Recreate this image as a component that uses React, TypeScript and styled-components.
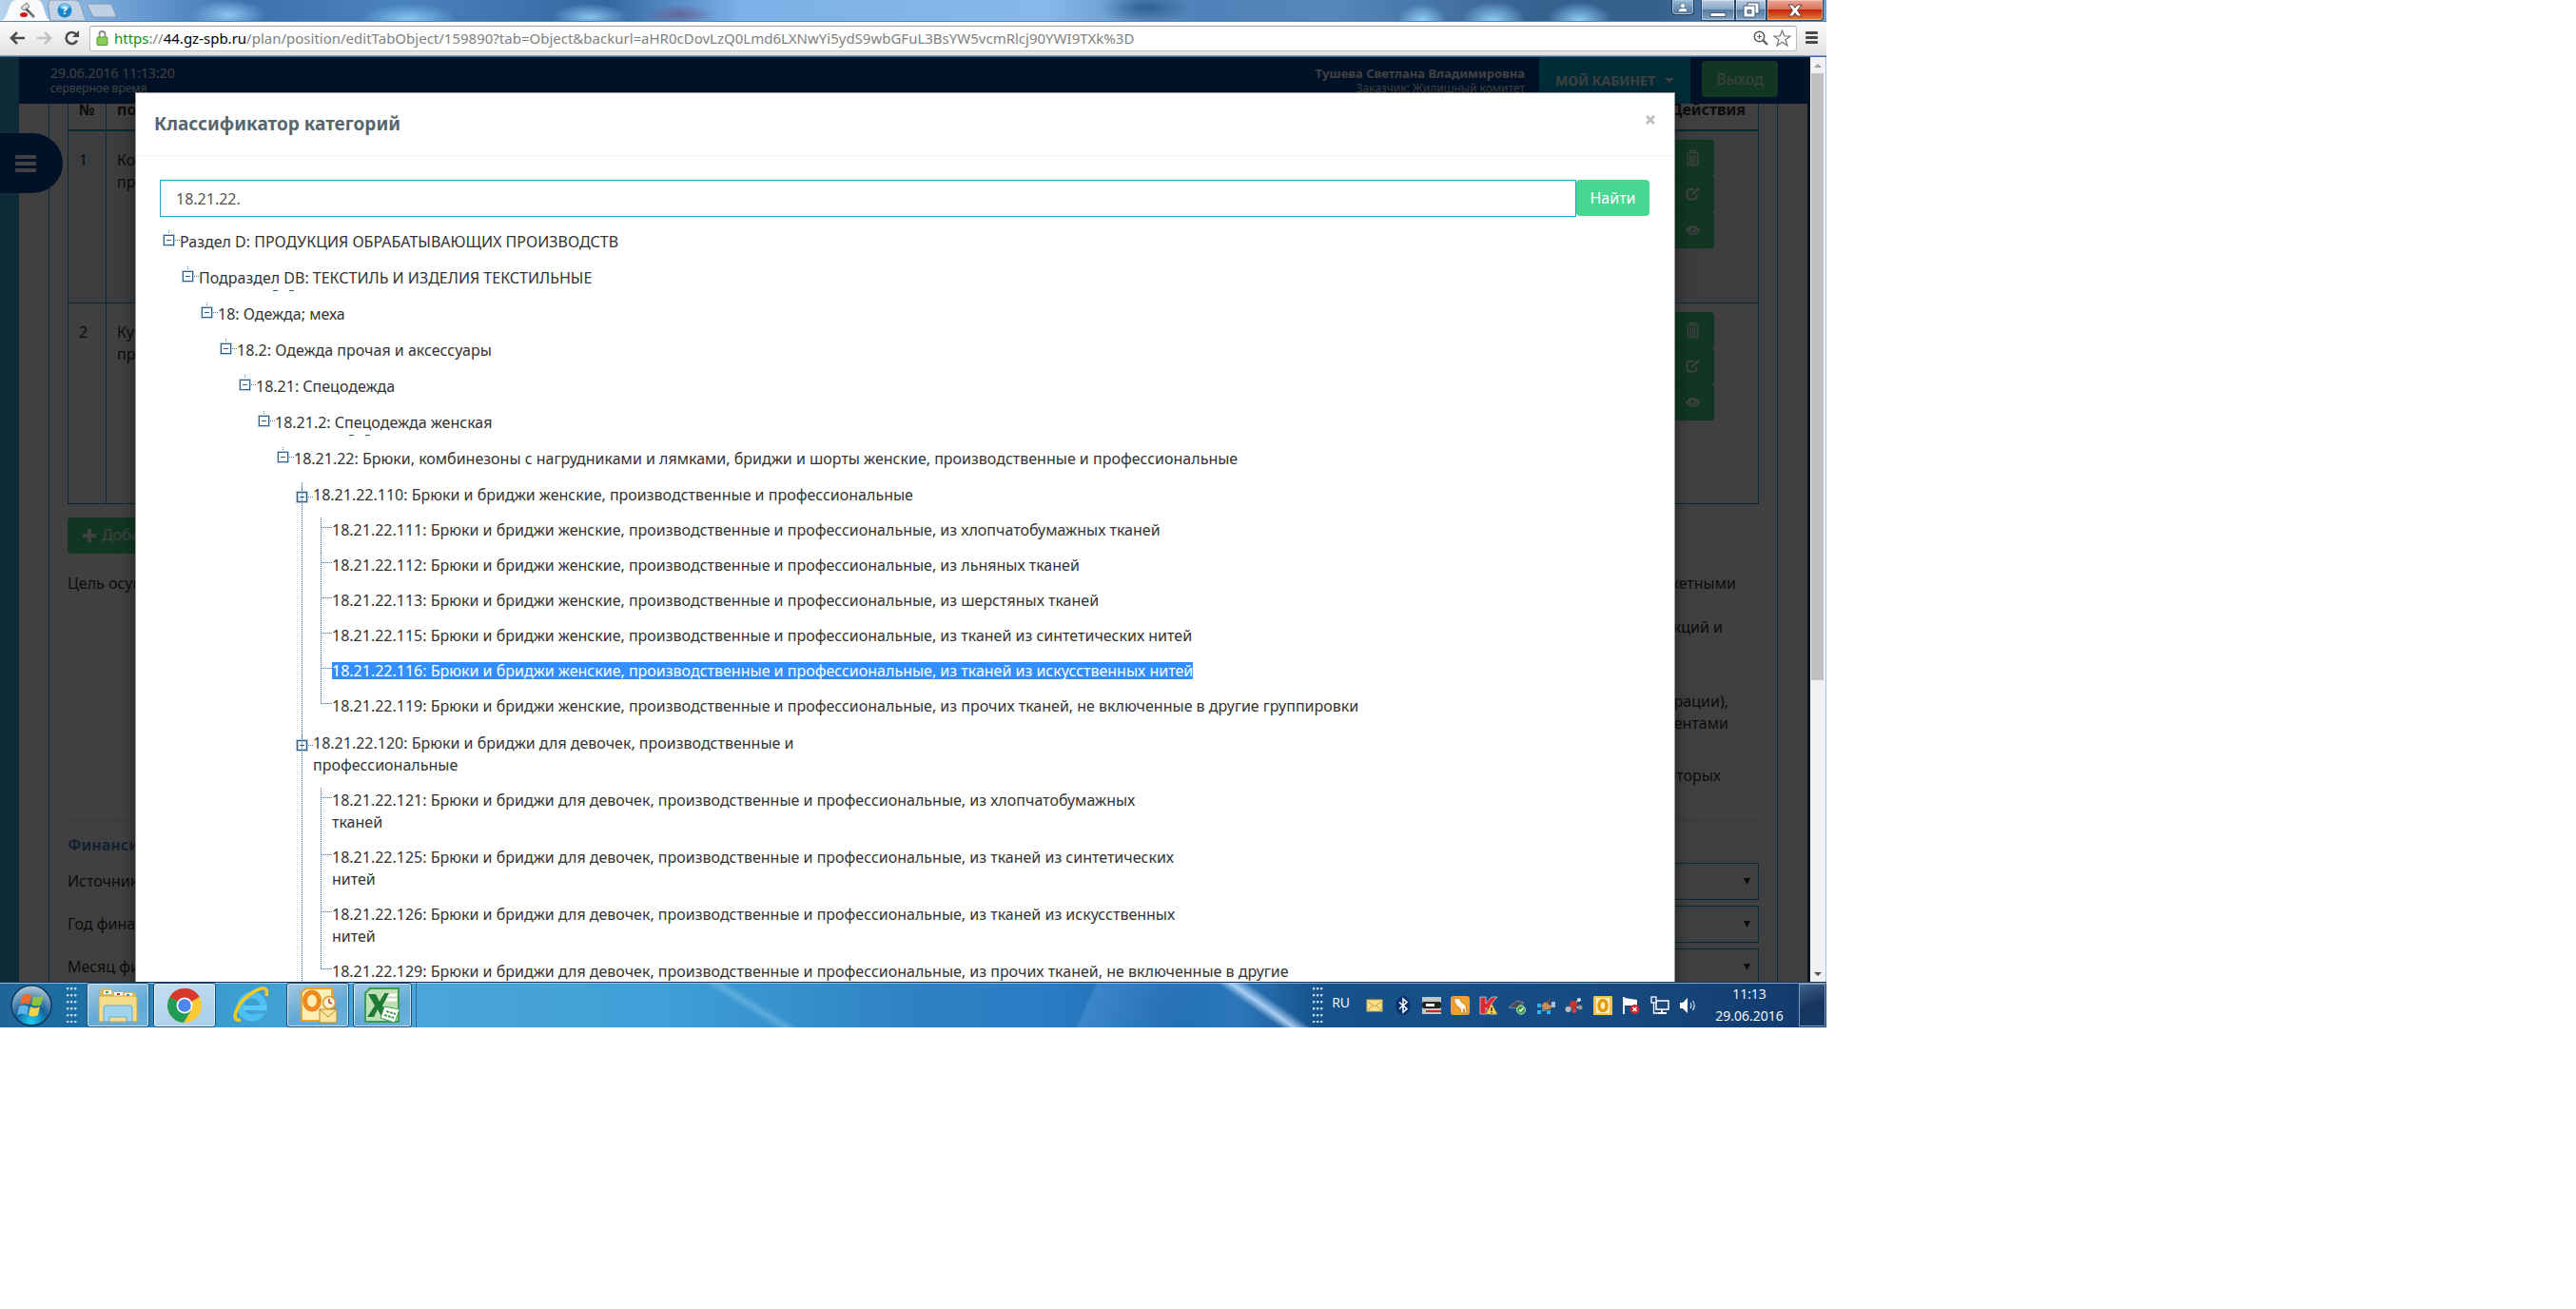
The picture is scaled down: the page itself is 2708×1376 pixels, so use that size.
import React from "react";
import styled, { createGlobalStyle, css } from "styled-components";

const Global = createGlobalStyle`
  *, *::before, *::after { box-sizing: border-box; }
  html, body { margin: 0; background: #fff; }
  button, input, select { font: inherit; color: inherit; margin: 0; }
  button { border: 0; padding: 0; background: none; cursor: pointer; }
  ul { list-style: none; margin: 0; padding: 0; }
`;

const uiFont = `"Open Sans", "Noto Sans", sans-serif`;
const siteFont = `"Noto Sans", "Open Sans", sans-serif`;
const teal = "#2ba0d0";
const green = "#48d791";
const navy = "#0448a0";

const Page = styled.div`
  display: flex;
  min-height: 100vh;
  padding: 0 788px 296px 0;
`;

const Screen = styled.div`
  flex: 1;
  min-width: 0;
  height: calc(100vh - 296px);
  display: flex;
  flex-direction: column;
  overflow: hidden;
`;

/* ---------- browser chrome ---------- */

const TitleBar = styled.div`
  height: 23px;
  flex: none;
  display: flex;
  justify-content: space-between;
  border-bottom: 1px solid #5b83ad;
  background:
    radial-gradient(ellipse 40px 16px at 240px 16px, #8cc6f2, transparent),
    radial-gradient(ellipse 50px 16px at 430px 20px, #86c2ee, transparent),
    radial-gradient(ellipse 40px 14px at 620px 18px, #86c2ee, transparent),
    radial-gradient(ellipse 36px 10px at 714px 15px, #65679c, transparent),
    radial-gradient(ellipse 50px 18px at 1205px 8px, #2f5f90, transparent),
    radial-gradient(ellipse 26px 18px at 1495px 22px, #8fd0fa, transparent),
    radial-gradient(ellipse 34px 20px at 1570px 22px, #8fd0fa, transparent),
    radial-gradient(ellipse 34px 20px at 1660px 22px, #8fd0fa, transparent),
    linear-gradient(90deg, #b7d4ee 0, #6fa1d6 130px, #3c72ae 260px, #4a82bf 420px, #3468a2 640px, #7db2e8 780px, #86b8ea 1100px, #4f82b8 1260px, #5687bd 1400px, #35618f 1620px, #35608e 1740px, #6f9dcb 100%);
`;

const TabStrip = styled.div`
  display: flex;
  svg { display: block; }
`;

const TabButton = styled.button<{ $pull?: boolean }>`
  height: 22px;
  margin-left: ${(p) => (p.$pull ? "-6px" : "0")};
`;

const WindowControls = styled.div`
  display: flex;
  align-items: flex-start;
  padding-right: 3px;
`;

const UserButton = styled.button`
  width: 24px;
  height: 16px;
  margin-right: 7px;
  border: 1px solid #1d3a58;
  border-top: 0;
  border-radius: 0 0 4px 4px;
  background: linear-gradient(#9db9d4, #4a739c);
  box-shadow: inset 0 0 0 1px #a9c4dd;
  display: grid;
  place-items: center;
`;

const WinButton = styled.button<{ $w: number; $close?: boolean }>`
  width: ${(p) => p.$w}px;
  height: 22px;
  display: grid;
  place-items: center;
  border: 1px solid #2a4766;
  border-top: 0;
  border-radius: ${(p) => (p.$close ? "0 0 4px 0" : "0")};
  box-shadow: inset 0 0 0 1px rgba(255, 255, 255, 0.4);
  background: ${(p) =>
    p.$close
      ? "linear-gradient(#eaa696 0, #d9735c 45%, #c4210a 50%, #e2832f 100%)"
      : "linear-gradient(#b9cde2 0, #86a6c7 45%, #56799f 50%, #82a5ca 100%)"};
`;

const Toolbar = styled.div`
  height: 36px;
  flex: none;
  display: flex;
  align-items: center;
  padding: 0 8px 1px;
  border-bottom: 1px solid #9c9c9c;
  background: linear-gradient(#fafafa, #e3e3e3);
`;

const NavButton = styled.button`
  width: 29px;
  height: 24px;
  flex: none;
  display: grid;
  place-items: center;
  &:first-child { margin-left: -5px; }
`;

const AddressBar = styled.div`
  flex: 1;
  min-width: 0;
  height: 27px;
  margin: 0 8px 0 4px;
  padding: 0 3px 0 6px;
  display: flex;
  align-items: center;
  border: 1px solid #bcbcbc;
  border-top-color: #a2a2a2;
  border-radius: 3px;
  background: #fff;
`;

const Url = styled.div`
  flex: 1;
  min-width: 0;
  margin-left: 6px;
  font: 15px/22px ${siteFont};
  color: #808080;
  white-space: nowrap;
  overflow: hidden;
  b { font-weight: 400; color: #0c940c; }
  strong { font-weight: 400; color: #000; }
`;

const IconButton = styled.button`
  width: 23px;
  height: 24px;
  display: grid;
  place-items: center;
`;

/* ---------- site under the backdrop ---------- */

const Viewport = styled.div`
  position: relative;
  flex: 1;
  min-height: 0;
  display: flex;
  overflow: hidden;
  border-top: 1px solid #2f69ad;
  font: 16px/23px ${siteFont};
  color: #333;
`;

const Site = styled.div`
  flex: 1;
  min-width: 0;
  border-left: 20px solid #34acd8;
  border-right: 3px solid #16557c;
  background: #fff;
`;

const SiteHeader = styled.header`
  height: 49px;
  display: flex;
  justify-content: flex-end;
  padding: 0 31px 0 33px;
  background: ${navy};
  color: #fff;
`;

const Stack = styled.div<{ $right?: boolean }>`
  display: flex;
  flex-direction: column;
  padding-top: 8px;
  margin-right: ${(p) => (p.$right ? "15px" : "auto")};
  text-align: ${(p) => (p.$right ? "right" : "left")};
  font-size: ${(p) => (p.$right ? 13 : 14)}px;
  line-height: 18px;
  small { font-size: 12px; line-height: 14px; }
`;

const CabinetButton = styled.button`
  width: 159px;
  height: 49px;
  margin-right: 12px;
  display: flex;
  align-items: center;
  justify-content: center;
  gap: 10px;
  background: #00b0e8;
  font-size: 14px;
  font-weight: 700;
`;

const GreenButton = styled.button<{ $w?: number }>`
  height: 38px;
  width: ${(p) => (p.$w ? `${p.$w}px` : "auto")};
  padding: 0 15px;
  display: flex;
  align-items: center;
  justify-content: center;
  gap: 5px;
  border-radius: 4px;
  background: ${green};
  color: #fff;
  white-space: nowrap;
`;

const ExitSlot = styled.div`
  padding-top: 4px;
`;

const Panel = styled.main`
  margin: 0 31px;
  padding: 0 19px;
  border: 1px solid ${teal};
  border-width: 0 1px;
  min-height: 930px;
`;

const Grid = styled.table`
  width: 100%;
  border-collapse: collapse;
  margin-bottom: 14px;
  th, td { border: 1px solid ${teal}; vertical-align: top; text-align: left; }
  th { height: 28px; padding: 0 11px; border-width: 0 1px 2px; line-height: 12px; font-weight: 700; vertical-align: top; }
  td { padding: 19px 11px 0; }
  th:first-child, td:first-child { width: 40px; }
  th:last-child { text-align: right; padding-right: 13px; }
  td:last-child { width: 140px; padding: 9px 46px 0 0; }
`;

const GridRow = styled.tr<{ $h: number; $shade?: boolean }>`
  height: ${(p) => p.$h}px;
  background: ${(p) => (p.$shade ? "#f0f4fa" : "#fff")};
`;

const Actions = styled.div`
  display: flex;
  flex-direction: column;
  align-items: flex-end;
  button { box-shadow: inset 0 0 0 1px #45cb89; }
`;

const Purpose = styled.div`
  display: grid;
  grid-template-columns: 1fr 1fr;
  padding-top: 20px;
  height: 281px;
  p { margin: 0; }
  border-bottom: 1px solid #ddd;
`;

const PurposeLines = styled.div`
  text-align: right;
`;

const PurposeLine = styled.p<{ $gap: number; $end: number }>`
  padding-top: ${(p) => p.$gap}px;
  padding-right: ${(p) => p.$end}px;
`;

const SectionTitle = styled.h3`
  margin: 14px 0 4px;
  font-size: 16px;
  line-height: 23px;
  color: #4a86c8;
`;

const FieldRow = styled.div`
  display: grid;
  grid-template-columns: 1fr 1fr;
  align-items: center;
  height: 45px;
`;

const SelectBox = styled.div`
  display: flex;
  align-items: center;
  height: 39px;
  padding-right: 8px;
  border: 1px solid ${teal};
  select { flex: 1; height: 36px; border: 0; appearance: none; background: transparent; }
`;

const Backdrop = styled.div`
  position: absolute;
  inset: 0 17px 0 0;
  background: rgba(0, 0, 0, 0.75);
`;

const MenuHandle = styled.button`
  position: absolute;
  left: 0;
  top: 80px;
  width: 66px;
  height: 63px;
  display: flex;
  align-items: center;
  padding-left: 16px;
  border-radius: 0 32px 32px 0;
  background: ${navy};
`;

const Scroll = styled.div`
  flex: none;
  width: 17px;
  display: flex;
  flex-direction: column;
  align-items: center;
  padding: 0 1px 0 0;
  border-right: 1px solid #9fbdf3;
  background: #f1f1f1;
`;

const ScrollArrow = styled.button`
  width: 15px;
  height: 17px;
  display: grid;
  place-items: center;
`;

const ScrollTrack = styled.div`
  flex: 1;
  width: 13px;
`;

const ScrollThumb = styled.div`
  height: 68%;
  background: #c1c1c1;
`;

/* ---------- modal ---------- */

const ModalLayer = styled.div`
  position: absolute;
  inset: 0 17px 0 0;
  padding: 37px 142px 0;
`;

const Modal = styled.section`
  min-height: 1100px;
  border: 1px solid #999;
  background: #fff;
  box-shadow: 0 5px 15px rgba(0, 0, 0, 0.5);
`;

const ModalHead = styled.header`
  display: flex;
  align-items: flex-start;
  justify-content: space-between;
  height: 66px;
  padding: 19px;
  border-bottom: 1px solid #eef5f8;
  h2 { margin: 0; font-size: 19px; line-height: 26px; font-weight: 700; color: #56666d; }
`;

const CloseButton = styled.button`
  height: 18px;
  width: 12px;
  display: grid;
  place-items: center;
`;

const ModalBody = styled.div`
  padding: 25px 26px 0 25px;
`;

const SearchForm = styled.form`
  display: flex;
  margin-bottom: 13px;
`;

const SearchInput = styled.input`
  flex: 1;
  min-width: 0;
  height: 39px;
  padding: 0 16px;
  border: 1px solid ${teal};
  border-radius: 0;
  outline: 0;
  color: #555;
  box-shadow: inset 0 1px 1px rgba(0, 0, 0, 0.08);
`;

/* ---------- tree ---------- */

const Tree = styled.ul`
  padding-left: 1px;
`;

const Branch = styled.li`
  display: grid;
  grid-template-columns: 20px minmax(0, 1fr);
`;

const ink = "#2a5f8f";
const line = "#4f7fa8";

const Rail = styled.div<{ $long?: boolean; $last?: boolean }>`
  display: flex;
  flex-direction: column;
  ${(p) =>
    p.$long &&
    css`
      background: repeating-linear-gradient(${line} 0 1px, #d3e1ec 1px 2px) 8px 0 / 1px 100% no-repeat;
    `}
  ${(p) => p.$last && css`height: 11px;`}
`;

const BoxButton = styled.button<{ $deep?: boolean }>`
  width: 20px;
  height: ${(p) => (p.$deep ? 22 : 18)}px;
  svg { display: block; }
`;

const Twig = styled.div`
  height: 11px;
  background: repeating-linear-gradient(90deg, ${line} 0 1px, #d3e1ec 1px 2px) 9px 10px / 11px 1px no-repeat;
`;

const Label = styled.div<{ $bottom: number; $speck?: boolean }>`
  padding: 2px 0 ${(p) => p.$bottom}px;
  white-space: nowrap;
  ${(p) =>
    p.$speck &&
    css`
      background:
        linear-gradient(${ink}, ${ink}) 78px 26px / 5px 1px no-repeat,
        linear-gradient(${ink}, ${ink}) 95px 26px / 5px 1px no-repeat;
    `}
`;

const Selected = styled.mark`
  display: inline-block;
  line-height: 18px;
  background: #338fff;
  color: #fff;
`;

const Leaves = styled.ul`
  padding-bottom: 2px;
`;

type Node = { lines: string[]; speck?: boolean; selected?: boolean; children?: Node[] };

const women = "Брюки и бриджи женские, производственные и профессиональные";
const girls = "Брюки и бриджи для девочек, производственные и профессиональные";

const deepNodes: Node[] = [
  {
    lines: [`18.21.22.110: ${women}`],
    children: [
      { lines: [`18.21.22.111: ${women}, из хлопчатобумажных тканей`] },
      { lines: [`18.21.22.112: ${women}, из льняных тканей`] },
      { lines: [`18.21.22.113: ${women}, из шерстяных тканей`] },
      { lines: [`18.21.22.115: ${women}, из тканей из синтетических нитей`] },
      { lines: [`18.21.22.116: ${women}, из тканей из искусственных нитей`], selected: true },
      { lines: [`18.21.22.119: ${women}, из прочих тканей, не включенные в другие группировки`] },
    ],
  },
  {
    lines: ["18.21.22.120: Брюки и бриджи для девочек, производственные и", "профессиональные"],
    children: [
      { lines: [`18.21.22.121: ${girls}, из хлопчатобумажных`, "тканей"] },
      { lines: [`18.21.22.125: ${girls}, из тканей из синтетических`, "нитей"] },
      { lines: [`18.21.22.126: ${girls}, из тканей из искусственных`, "нитей"] },
      { lines: [`18.21.22.129: ${girls}, из прочих тканей, не включенные в другие`] },
    ],
  },
];

const path: Node[] = [
  { lines: ["Раздел D: ПРОДУКЦИЯ ОБРАБАТЫВАЮЩИХ ПРОИЗВОДСТВ"] },
  { lines: ["Подраздел DB: ТЕКСТИЛЬ И ИЗДЕЛИЯ ТЕКСТИЛЬНЫЕ"], speck: true },
  { lines: ["18: Одежда; меха"] },
  { lines: ["18.2: Одежда прочая и аксессуары"] },
  { lines: ["18.21: Спецодежда"] },
  { lines: ["18.21.2: Спецодежда женская"], speck: true },
  { lines: ["18.21.22: Брюки, комбинезоны с нагрудниками и лямками, бриджи и шорты женские, производственные и профессиональные"] },
];

const tree = path.reduceRight<Node[]>((children, node) => [{ ...node, children }], deepNodes);

const Lines = ({ node }: { node: Node }) => (
  <>
    {node.lines.map((text) =>
      node.selected ? <Selected key={text}>{text}</Selected> : <div key={text}>{text}</div>
    )}
  </>
);

const Toggle = ({ deep }: { deep?: boolean }) => (
  <BoxButton type="button" aria-label="Свернуть" $deep={deep}>
    <svg width="20" height={deep ? 22 : 18} viewBox={deep ? "0 -4 20 22" : "0 0 20 18"}>
      <path d="M8.5 1v5" stroke={line} strokeDasharray="1 1" />
      <rect x="3.500" y="6.500" width="10" height="10" fill="none" stroke="#b9cfe0" strokeWidth="3" />
      <rect x="3.500" y="6.500" width="10" height="10" fill={deep ? "none" : "#fff"} stroke={ink} />
      <path d="M6 11.5h5" stroke={ink} />
      <path d="M15 11.5h5" stroke={line} strokeDasharray="1 1" />
    </svg>
  </BoxButton>
);

const TreeItem = ({ node, level, last }: { node: Node; level: number; last: boolean }) => {
  if (!node.children) {
    return (
      <Branch>
        <Rail $long $last={last}>
          <Twig />
        </Rail>
        <Label $bottom={12}>
          <Lines node={node} />
        </Label>
      </Branch>
    );
  }
  const deep = level === path.length;
  const List = deep ? Leaves : "ul";
  return (
    <Branch>
      <Rail $long={deep}>
        <Toggle deep={deep} />
      </Rail>
      <div>
        <Label $bottom={deep ? 12 : 13} $speck={node.speck}>
          <Lines node={node} />
        </Label>
        <List>
          {node.children.map((child, i) => (
            <TreeItem key={child.lines[0]} node={child} level={level + 1} last={i === node.children!.length - 1} />
          ))}
        </List>
      </div>
    </Branch>
  );
};

/* ---------- taskbar ---------- */

const Taskbar = styled.footer`
  height: 48px;
  flex: none;
  display: flex;
  align-items: stretch;
  border-top: 1px solid #1c3350;
  box-shadow: inset 0 1px 0 rgba(200, 230, 255, 0.6);
  background:
    linear-gradient(32deg, transparent 46%, rgba(160, 215, 250, 0.35) 50%, transparent 54%) 660px 0 / 260px 48px no-repeat,
    linear-gradient(215deg, transparent 40%, rgba(190, 222, 255, 0.85) 50%, transparent 58%) 1270px 0 / 115px 48px no-repeat,
    linear-gradient(115deg, transparent 50%, rgba(80, 150, 215, 0.5) 51%, transparent 80%) 940px 0 / 400px 48px no-repeat,
    linear-gradient(90deg, #1f6698 0, #1c6da3 80px, #3d9ed3 240px, #4aa6da 430px, #3f9fd6 700px, #2f83c3 950px, #2a7cc4 1100px, #1f6bb0 1220px, #2c78bb 1300px, #17528c 1385px, #164a80 1700px, #14386a 100%);
  color: #fff;
  font: 14px/23px ${uiFont};
`;

const Orb = styled.button`
  width: 66px;
  margin-right: 4px;
  display: grid;
  place-items: center;
`;

const Grip = styled.div`
  width: 11px;
  margin: 5px 0;
  background: radial-gradient(circle at 1px 1px, #bcd6ea 1px, transparent 2px) 0 0 / 4px 7px;
`;

const TaskButton = styled.button<{ $kind: "open" | "active" | "idle"; $w?: number }>`
  width: ${(p) => p.$w ?? 66}px;
  margin-left: 4px;
  display: grid;
  place-items: center;
  ${(p) =>
    p.$kind !== "idle" &&
    css`
      border: 1px solid #1f4b70;
      border-radius: 3px;
      box-shadow: inset 0 0 0 1px rgba(255, 255, 255, 0.65);
      background: ${p.$kind === "active"
        ? "linear-gradient(160deg, #c6def0, #a5cdea)"
        : "linear-gradient(160deg, #a3c9e2, #5fa9d6 60%, #6db3dc)"};
    `}
`;

const Buttons = styled.div`
  display: flex;
  margin-left: 6px;
  padding-right: 4px;
  margin-right: auto;
  border-right: 1px solid #2f6d9c;
`;

const Lang = styled.span`
  margin: 9px 14px 0 9px;
`;

const Tray = styled.div`
  display: flex;
  align-items: center;
  gap: 6px;
`;

const Clock = styled.time`
  width: 104px;
  text-align: center;
  display: flex;
  flex-direction: column;
`;

const ShowDesktop = styled.button`
  width: 28px;
  margin: 1px 1px 1px 0;
  border: 1px solid #7f9dbd;
  background: linear-gradient(160deg, #3f6289, #16355f 50%, #173a68);
`;

const TrayIcon = ({ children, label }: { children: React.ReactNode; label: string }) => (
  <svg width="24" height="24" viewBox="-2 -2 24 24" role="img" aria-label={label}>
    {children}
  </svg>
);

const TrashIcon = () => (
  <svg width="16" height="18" viewBox="0 0 16 18" fill="none" stroke="#fff">
    <path d="M1 3.500h14M5 3V1h6v2M2.500 5v12h11V5M5.500 6v10M8 6v10M10.500 6v10" strokeWidth="1.500" />
  </svg>
);

const EditIcon = () => (
  <svg width="18" height="16" viewBox="0 0 18 16" fill="none" stroke="#fff">
    <path d="M10 2H5.500Q2 2 2 5v6q0 3.500 3.500 3.500H10q3.500 0 3.500-3.500V9" strokeWidth="2.400" />
    <path d="M7 10l1-3 6-6 2.500 2-6.500 6z" fill="#fff" stroke="none" />
    <circle cx="16.500" cy="1.500" r="1.500" fill="#fff" stroke="none" />
  </svg>
);

const EyeIcon = () => (
  <svg width="18" height="12" viewBox="0 0 18 12">
    <path d="M0 6Q4 0 9 0t9 6q-4 6-9 6T0 6z" fill="#fff" />
    <path d="M4 5a5 4.500 0 0 0 10 0" fill="none" stroke={green} strokeWidth="1.300" />
    <circle cx="9" cy="5" r="2" fill={green} />
  </svg>
);

const RowActions = () => (
  <Actions>
    <GreenButton type="button" $w={45} aria-label="Удалить"><TrashIcon /></GreenButton>
    <GreenButton type="button" $w={45} aria-label="Изменить"><EditIcon /></GreenButton>
    <GreenButton type="button" $w={45} aria-label="Просмотр"><EyeIcon /></GreenButton>
  </Actions>
);

const purposeLines = [
  { text: "бюджетными", gap: 0, end: 24 },
  { text: "функций и", gap: 23, end: 38 },
  { text: "Федерации),", gap: 55, end: 32 },
  { text: "документами", gap: 0, end: 32 },
  { text: "которых", gap: 32, end: 40 },
];

const fields = ["Источник финансирования", "Год финансирования", "Месяц финансирования"];

export default function App() {
  return (
    <Page>
      <Global />
      <Screen>
        <TitleBar>
          <TabStrip>
            <TabButton type="button" aria-label="Закупки">
              <svg width="56" height="22" viewBox="0 0 56 22">
                <path d="M0 22c5-1 6-4 8-10s4-12 9-12h22c5 0 6 6 8 12s3 9 8 10z" fill="#f9fafb" />
                <path d="M26 8l10 10" stroke="#555" strokeWidth="2.500" />
                <path d="M30 12l6 6" stroke="#999" strokeWidth="1" />
                <path d="M22 8l6-5 3 4-6 4z" fill="#ddd" stroke="#777" />
                <ellipse cx="25" cy="15.500" rx="4" ry="2.500" fill="#d01818" />
              </svg>
            </TabButton>
            <TabButton type="button" $pull aria-label="Справка">
              <svg width="42" height="22" viewBox="0 0 42 22">
                <path d="M3 22C2 12-2 0 4 0h25c5 0 6 6 8 12s2 9 5 10z" fill="#c3d3e6" stroke="#8196ae" />
                <circle cx="18" cy="11" r="7.500" fill="#1b87c9" />
                <ellipse cx="18" cy="7" rx="5" ry="3" fill="#7cc8ee" />
                <text x="18" y="15" fontSize="11" fontWeight="700" textAnchor="middle" fill="#fff" fontFamily="Open Sans, sans-serif">?</text>
              </svg>
            </TabButton>
            <TabButton type="button" aria-label="Новая вкладка">
              <svg width="34" height="22" viewBox="0 0 34 22">
                <path d="M2 4h20c3 0 4 2 5 5l3 7c0 2-1 2-3 2H9c-3 0-4-1-5-4L0 6c0-1 1-2 2-2z" fill="#bfd0e4" stroke="#7f99b5" />
              </svg>
            </TabButton>
          </TabStrip>
          <WindowControls>
            <UserButton type="button" aria-label="Пользователь">
              <svg width="12" height="10" viewBox="0 0 12 10" fill="#fff" stroke="#33506e" strokeWidth=".6">
                <circle cx="6" cy="3" r="2.500" />
                <path d="M1.500 9.500V8q0-2.500 4.500-2.500T10.500 8v1.500z" />
              </svg>
            </UserButton>
            <WinButton type="button" $w={36} aria-label="Свернуть окно">
              <svg width="18" height="18" viewBox="0 0 18 18"><rect x="1" y="11.500" width="16" height="4" fill="#fff" stroke="#45556a" /></svg>
            </WinButton>
            <WinButton type="button" $w={33} aria-label="Развернуть">
              <svg width="18" height="18" viewBox="0 0 18 18" fill="#fff" stroke="#45556a">
                <path d="M5 1h12v11H5z" />
                <path d="M1 4h12v12H1z" />
                <path d="M5 8.500h4v3.500H5z" fill="#7f9ebf" />
              </svg>
            </WinButton>
            <WinButton type="button" $w={60} $close aria-label="Закрыть окно">
              <svg width="16" height="14" viewBox="0 0 16 14">
                <path d="M1 1h4.500L8 4.200 10.500 1H15l-4.500 6 4.500 6h-4.500L8 9.800 5.500 13H1l4.500-6z" fill="#fff" stroke="#5b3a3a" />
              </svg>
            </WinButton>
          </WindowControls>
        </TitleBar>

        <Toolbar>
          <NavButton type="button" aria-label="Назад">
            <svg width="16" height="14" viewBox="0 0 16 14" fill="none" stroke="#4c4c4c" strokeWidth="2.600"><path d="M8 1L2 7l6 6M2 7h14" /></svg>
          </NavButton>
          <NavButton type="button" aria-label="Вперёд">
            <svg width="16" height="14" viewBox="0 0 16 14" fill="none" stroke="#c2c2c2" strokeWidth="2.600"><path d="M8 1l6 6-6 6M14 7H0" /></svg>
          </NavButton>
          <NavButton type="button" aria-label="Обновить">
            <svg width="17" height="16" viewBox="0 0 17 16">
              <path d="M13.500 4.500A6 6 0 1 0 14 10.500" fill="none" stroke="#4c4c4c" strokeWidth="2.600" />
              <path d="M16 0v7H9z" fill="#4c4c4c" />
            </svg>
          </NavButton>
          <AddressBar>
            <svg width="13" height="16" viewBox="0 0 13 16">
              <path d="M3.500 7V4a3 3 0 0 1 6 0v3" fill="none" stroke="#8a8a8a" strokeWidth="1.800" />
              <rect x="1" y="7" width="11" height="8.500" rx="1" fill="#86cf58" stroke="#55993a" />
            </svg>
            <Url role="textbox" aria-label="Адрес">
              <b>https</b>://<strong>44.gz-spb.ru</strong>/plan/position/editTabObject/159890?tab=Object&amp;backurl=aHR0cDovLzQ0Lmd6LXNwYi5ydS9wbGFuL3BsYW5vcmRlcj90YWI9TXk%3D
            </Url>
            <IconButton type="button" aria-label="Масштаб">
              <svg width="16" height="16" viewBox="0 0 16 16" fill="none" stroke="#5a5a5a">
                <circle cx="6.500" cy="6.500" r="5.200" strokeWidth="1.500" />
                <path d="M4 6.500h5M6.500 4v5" />
                <path d="M10.500 10.500l4.500 4.500" strokeWidth="2.400" />
              </svg>
            </IconButton>
            <IconButton type="button" aria-label="В закладки">
              <svg width="19" height="18" viewBox="0 0 19 18"><path d="M9.500 1l2.300 6H18l-5 3.700 2 6.300-5.500-3.700L4 17l2-6.300L1 7h6.200z" fill="#fff" stroke="#747474" strokeWidth="1.200" /></svg>
            </IconButton>
          </AddressBar>
          <svg width="15" height="14" viewBox="0 0 15 14" fill="#4a4a4a">
            <rect x="1" width="13" height="3" rx="1" /><rect x="1" y="5" width="13" height="3" rx="1" /><rect x="1" y="10" width="13" height="3" rx="1" />
          </svg>
        </Toolbar>

        <Viewport>
          <Site>
            <SiteHeader>
              <Stack>
                <span>29.06.2016 11:13:20</span>
                <small>серверное время</small>
              </Stack>
              <Stack $right>
                <strong>Тушева Светлана Владимировна</strong>
                <small>Заказчик: Жилищный комитет</small>
              </Stack>
              <CabinetButton type="button">
                МОЙ КАБИНЕТ
                <svg width="10" height="5" viewBox="0 0 10 5"><path d="M0 0h10L5 5z" fill="#fff" /></svg>
              </CabinetButton>
              <ExitSlot><GreenButton type="button" $w={80}>Выход</GreenButton></ExitSlot>
            </SiteHeader>
            <Panel>
              <Grid>
                <thead>
                  <tr><th>№</th><th>позиции</th><th>Действия</th></tr>
                </thead>
                <tbody>
                  <GridRow $h={181} $shade>
                    <td>1</td><td>Комбинезон<br />производственный</td><td><RowActions /></td>
                  </GridRow>
                  <GridRow $h={211}>
                    <td>2</td><td>Куртка<br />производственная</td><td><RowActions /></td>
                  </GridRow>
                </tbody>
              </Grid>
              <GreenButton type="button">
                <svg width="16" height="16" viewBox="0 0 16 16"><path d="M6 1h4v5h5v4h-5v5H6v-5H1V6h5z" fill="#fff" /></svg>
                Добавить
              </GreenButton>
              <Purpose>
                <p>Цель осуществления</p>
                <PurposeLines>
                  {purposeLines.map((l) => (
                    <PurposeLine key={l.text} $gap={l.gap} $end={l.end}>{l.text}</PurposeLine>
                  ))}
                </PurposeLines>
              </Purpose>
              <SectionTitle>Финансирование</SectionTitle>
              {fields.map((name, i) => (
                <FieldRow key={name}>
                  <label htmlFor={`field-${i}`}>{name}</label>
                  <SelectBox>
                    <select id={`field-${i}`} />
                    <svg width="7" height="7" viewBox="0 0 7 7"><path d="M0 0h7L3.500 7z" fill="#333" /></svg>
                  </SelectBox>
                </FieldRow>
              ))}
            </Panel>
          </Site>
          <Scroll>
            <ScrollArrow type="button" aria-label="Вверх">
              <svg width="8" height="4" viewBox="0 0 8 4"><path d="M0 4h8L4 0z" fill="#a0a0a0" /></svg>
            </ScrollArrow>
            <ScrollTrack><ScrollThumb /></ScrollTrack>
            <ScrollArrow type="button" aria-label="Вниз">
              <svg width="8" height="4" viewBox="0 0 8 4"><path d="M0 0h8L4 4z" fill="#505050" /></svg>
            </ScrollArrow>
          </Scroll>
          <MenuHandle type="button" aria-label="Меню">
            <svg width="22" height="18" viewBox="0 0 22 18" fill="#fff">
              <rect width="22" height="4" rx="1" /><rect y="7" width="22" height="4" rx="1" /><rect y="14" width="22" height="4" rx="1" />
            </svg>
          </MenuHandle>
          <Backdrop />
          <ModalLayer>
            <Modal role="dialog" aria-labelledby="dialog-title">
              <ModalHead>
                <h2 id="dialog-title">Классификатор категорий</h2>
                <CloseButton type="button" aria-label="Закрыть">
                  <svg width="10" height="10" viewBox="0 0 10 10" stroke="#bfbfbf" strokeWidth="3"><path d="M1 1l8 8M9 1L1 9" /></svg>
                </CloseButton>
              </ModalHead>
              <ModalBody>
                <SearchForm onSubmit={(e) => e.preventDefault()}>
                  <SearchInput aria-label="Код или название" defaultValue="18.21.22." />
                  <GreenButton type="submit" $w={77}>Найти</GreenButton>
                </SearchForm>
                <Tree>
                  {tree.map((node) => (
                    <TreeItem key={node.lines[0]} node={node} level={0} last />
                  ))}
                </Tree>
              </ModalBody>
            </Modal>
          </ModalLayer>
        </Viewport>

        <Taskbar>
          <Orb type="button" aria-label="Пуск">
            <svg width="46" height="46" viewBox="0 0 46 46">
              <defs>
                <radialGradient id="orb" cx=".5" cy=".9" r=".9">
                  <stop offset="0" stopColor="#19d0f5" /><stop offset=".45" stopColor="#15629b" /><stop offset="1" stopColor="#b9cddd" />
                </radialGradient>
              </defs>
              <circle cx="23" cy="23" r="21" fill="url(#orb)" stroke="#123a5c" strokeWidth="1.500" />
              <path d="M13 13q5-4 10-1l-2 10q-5-3-10 0z" fill="#ee6a2c" />
              <path d="M25 13q5 3 11-1l-3 10q-5 3-10 0z" fill="#8cc63e" />
              <path d="M10 24q5-3 10 0l-2 9q-5-3-10 0z" fill="#5bb5ea" />
              <path d="M22 24q5 3 10 0l-2 9q-5 3-10 0z" fill="#fbd043" />
            </svg>
          </Orb>
          <Grip />
          <Buttons>
            <TaskButton type="button" $kind="open" aria-label="Проводник">
              <svg width="42" height="38" viewBox="0 0 42 38">
                <path d="M2 4q0-3 3-3h8l3 4h21q3 0 3 3v26H2z" fill="#d9b95a" />
                <path d="M6 3h8v4H6zM17 5h9v4h-9zM28 6h8v4h-8z" fill="#fff" />
                <path d="M8 4h3v2H8z" fill="#2e9e55" /><path d="M20 6h3v2h-3z" fill="#d03030" /><path d="M30 7h3v2h-3z" fill="#3080d0" />
                <path d="M1 9h38l2 2v25H1z" fill="#f3dc8c" stroke="#cfa94a" />
                <path d="M6 21q0-2 2-2h26q2 0 2 2v15h-6v-5H12v5H6z" fill="#9fd4ee" stroke="#62a9cf" />
              </svg>
            </TaskButton>
            <TaskButton type="button" $kind="active" aria-label="Chrome">
              <svg width="38" height="38" viewBox="0 0 38 38">
                <circle cx="19" cy="19" r="18" fill="#fbc934" />
                <path d="M19 19L3.400 10A18 18 0 0 1 34.600 10z" fill="#d8382c" />
                <path d="M19 1a18 18 0 0 1 15.600 9H19z" fill="#d8382c" />
                <path d="M3.400 10A18 18 0 0 0 18 37l8-13-7-5z" fill="#1f9d57" />
                <circle cx="19" cy="19" r="8.500" fill="#fff" /><circle cx="19" cy="19" r="6.800" fill="#4a86ee" />
              </svg>
            </TaskButton>
            <TaskButton type="button" $kind="idle" aria-label="Internet Explorer">
              <svg width="40" height="40" viewBox="0 0 40 40" fill="none">
                <circle cx="21" cy="21" r="12" stroke="#4dc0f2" strokeWidth="7" />
                <path d="M22 26.500h15" stroke="#4aa4d8" strokeWidth="4" />
                <path d="M12 22.500h24.500" stroke="#58c8f6" strokeWidth="5" />
                <path d="M9 35C-3 38 5 17 19 8S38 0 36 10" stroke="#f4cc20" strokeWidth="3.500" />
              </svg>
            </TaskButton>
            <TaskButton type="button" $kind="open" aria-label="Outlook">
              <svg width="42" height="40" viewBox="0 0 42 40">
                <path d="M4 6l5-4h27v34H4z" fill="#fdeeb5" stroke="#eca32c" strokeWidth="2" />
                <ellipse cx="15" cy="15" rx="7.500" ry="9" fill="none" stroke="#ee8a1d" strokeWidth="5" />
                <circle cx="33" cy="17" r="6.500" fill="#fff4d6" stroke="#e09a2a" strokeWidth="1.500" />
                <path d="M33 13v4l3 1" fill="none" stroke="#c0392b" strokeWidth="1.500" />
                <path d="M23 24h18v14H23z" fill="#fbe3a0" stroke="#b98722" />
                <path d="M23 24l9 8 9-8" fill="none" stroke="#b98722" />
              </svg>
            </TaskButton>
            <TaskButton type="button" $kind="open" $w={62} aria-label="Excel">
              <svg width="40" height="38" viewBox="0 0 40 38">
                <path d="M2 6l5-5h30v35H2z" fill="#bfe0b4" stroke="#3c9a4c" strokeWidth="2" />
                <path d="M20 8h15M24 13h11" stroke="#fff" strokeWidth="3" />
                <path d="M5 7h8l4 8 5-9h5l-7 13 7 12h-8l-4-8-4 8H4l8-12z" fill="#1f7a38" />
                <path d="M22 20l16 3-5 14-15-5z" fill="#fff" stroke="#3c9a4c" />
                <path d="M24 25l10 3M22 29l10 3" stroke="#3c9a4c" strokeWidth="2" strokeDasharray="3 1" />
              </svg>
            </TaskButton>
          </Buttons>
          <Grip />
          <Lang>RU</Lang>
          <Tray>
            <TrayIcon label="Почта"><rect x="2" y="4" width="16" height="12" fill="#f8e08a" stroke="#d9b24c" /><path d="M3 6l7 5 7-5M3 15l5-5M17 15l-5-5" fill="none" stroke="#c79a34" /></TrayIcon>
            <TrayIcon label="Bluetooth"><ellipse cx="10" cy="10" rx="7.500" ry="10" fill="#0a2f6b" /><path d="M6 6.500l8 7-4 3.500V3l4 3.500-8 7" fill="none" stroke="#fff" strokeWidth="1.500" /></TrayIcon>
            <TrayIcon label="Устройство"><rect y="1" width="20" height="18" fill="#bcc8c8" /><rect y="6" width="20" height="7" rx="2" fill="#222" /><rect x="4" y="8" width="9" height="3" fill="#fff" /><rect x="4" y="15" width="16" height="2" fill="#d22" /></TrayIcon>
            <TrayIcon label="Апплет"><rect width="20" height="20" rx="3" fill="#f0a030" /><path d="M4 2l3 1 2-1 2 4 5 4 1 8h-2l-1-5-1 5h-2l-1-5-4-3-2-4z" fill="#fff7e0" stroke="#a86410" strokeWidth=".6" /></TrayIcon>
            <TrayIcon label="Антивирус"><path d="M1 1h6v7l6-7h6l-8 9 7 9h-7l-4-7v7H1z" fill="#e22630" stroke="#fff" strokeWidth=".6" /><path d="M13 8l6 11H7z" fill="#f6d860" stroke="#a8831b" strokeWidth=".7" /><path d="M13 12v4M13 17v1" stroke="#222" strokeWidth="1.400" /></TrayIcon>
            <TrayIcon label="Безопасное извлечение"><path d="M1 12l9-7 7 2-8 6z" fill="#454d54" stroke="#99a" strokeWidth=".8" /><circle cx="14" cy="14.500" r="4.500" fill="#2f9d3c" stroke="#cfe8cf" /><path d="M12 14.500l1.500 1.500 3-3.500" fill="none" stroke="#fff" strokeWidth="1.500" /></TrayIcon>
            <TrayIcon label="Графика"><path d="M1 8h4v4H1zM6 12h4v4H6zM1 15h4v4H1zM11 15h4v4h-4z" fill="#29b6f6" /><path d="M5 10l4-4 2 1 4-5-3 6 5 2-2 4-7 1z" fill="#c58d62" stroke="#6b4628" strokeWidth=".7" /><rect x="16" y="6" width="4" height="6" fill="#9dc4dc" /></TrayIcon>
            <TrayIcon label="Сервис"><path d="M10 9l5-6M10 9l-6 6M10 10l5 3" stroke="#bbb" strokeWidth="1.500" /><circle cx="9" cy="9" r="4" fill="#c2362e" /><circle cx="15" cy="4" r="2" fill="#ddd" /><circle cx="3.500" cy="14" r="3" fill="#bbb" /><circle cx="10" cy="15.500" r="2.500" fill="#c44" /><circle cx="16" cy="12" r="2.500" fill="#999" /></TrayIcon>
            <TrayIcon label="Outlook"><rect width="20" height="20" rx="1" fill="#f6c744" /><rect x="3" y="2" width="14" height="16" fill="#fdf0b8" /><ellipse cx="10" cy="10" rx="4" ry="5.500" fill="none" stroke="#e29a12" strokeWidth="3.500" /></TrayIcon>
            <TrayIcon label="Центр поддержки"><path d="M2 1v18" stroke="#fff" strokeWidth="1.800" /><path d="M3 2l6 1 7 1v8l-6-2H3z" fill="#fff" /><circle cx="13.500" cy="14" r="5" fill="#d8252c" /><path d="M11.500 12l4 4M15.500 12l-4 4" stroke="#fff" strokeWidth="1.500" /></TrayIcon>
            <TrayIcon label="Сеть"><rect x="6" y="5" width="13" height="9" fill="#1f4878" stroke="#fff" strokeWidth="1.500" /><path d="M12 14v3M8 18h9" stroke="#fff" strokeWidth="1.800" /><rect x="1" y="1" width="5" height="6" fill="#164a80" stroke="#fff" strokeWidth="1.300" /><path d="M3.500 7v11H8" fill="none" stroke="#fff" strokeWidth="1.300" /></TrayIcon>
            <TrayIcon label="Громкость"><path d="M1 7h3l5-5v16l-5-5H1z" fill="#fff" /><path d="M12 7q2 3 0 6M14.500 5q3.500 5 0 10" fill="none" stroke="#cfe0f0" strokeWidth="1.200" /></TrayIcon>
          </Tray>
          <Clock dateTime="2016-06-29T11:13">
            <span>11:13</span>
            <span>29.06.2016</span>
          </Clock>
          <ShowDesktop type="button" aria-label="Показать рабочий стол" />
        </Taskbar>
      </Screen>
    </Page>
  );
}
